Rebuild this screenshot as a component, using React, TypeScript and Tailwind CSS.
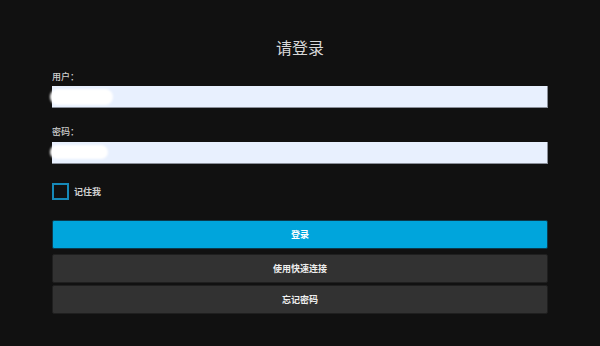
export default function App() {
  return (
    <div
      className="min-h-screen w-full bg-[#111111] text-white"
      style={{ fontFamily: '"Noto Sans CJK SC", "Noto Sans", sans-serif' }}
    >
      <div className="mx-auto flex w-[496px] flex-col pt-[35px]">
        {/* Title */}
        <h1 className="text-center text-[16px] leading-[24px] text-[#d8d8d8]">请登录</h1>

        {/* Username */}
        <label className="mt-[12px] text-[9px] font-medium leading-[12px] text-[#d0d0d0]">用户：</label>
        <div className="relative mt-[3px] h-[22px] border-b border-r border-[#8a8f99] bg-[#e8f0fe]">
          <div className="absolute -left-[2px] top-[3px] h-[16px] w-[63px] rounded-full bg-white blur-[1px]" />
        </div>

        {/* Password */}
        <label className="mt-[18px] text-[9px] font-medium leading-[12px] text-[#d0d0d0]">密码：</label>
        <div className="relative mt-[4px] h-[22px] border-b border-r border-[#8a8f99] bg-[#e8f0fe]">
          <div className="absolute -left-[2px] top-[3px] h-[14px] w-[58px] rounded-full bg-white blur-[1px]" />
        </div>

        {/* Remember */}
        <div className="mt-[19px] flex items-center gap-[5px]">
          <div className="h-[17px] w-[17px] border-2 border-[#1689b8] bg-transparent" />
          <span className="text-[9px] font-bold text-[#d0d0d0]">记住我</span>
        </div>

        {/* Buttons */}
        <button className="mt-[20px] h-[29px] rounded-[2px] border border-[#0b3a4d] bg-[#00a5dc] text-[9px] font-bold text-white">
          登录
        </button>
        <button className="mt-[5px] h-[29px] rounded-[2px] border border-[#1f1f1f] bg-[#323232] text-[9px] font-bold text-[#eeeeee]">
          使用快速连接
        </button>
        <button className="mt-[2px] h-[29px] rounded-[2px] border border-[#1f1f1f] bg-[#323232] text-[9px] font-bold text-[#eeeeee]">
          忘记密码
        </button>
      </div>
    </div>
  )
}
